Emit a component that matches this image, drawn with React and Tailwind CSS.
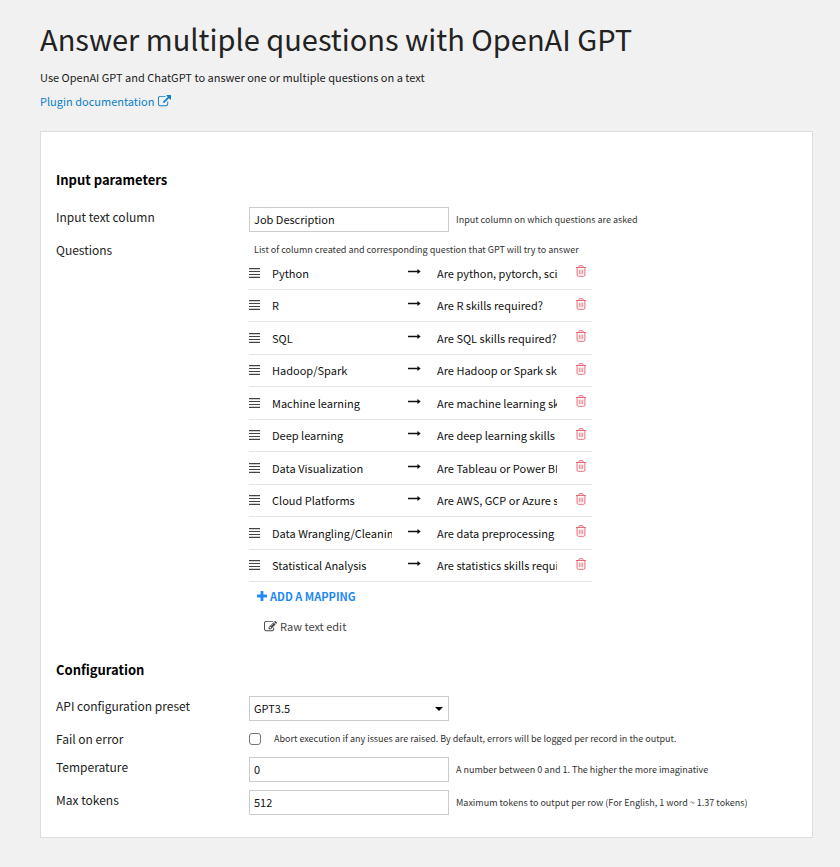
import React, { useState } from "react";

const initialMappings = [
  { name: "Python", question: "Are python, pytorch, scikit-learn skills required?" },
  { name: "R", question: "Are R skills required?" },
  { name: "SQL", question: "Are SQL skills required?" },
  { name: "Hadoop/Spark", question: "Are Hadoop or Spark skills required?" },
  { name: "Machine learning", question: "Are machine learning skills required?" },
  { name: "Deep learning", question: "Are deep learning skills required?" },
  { name: "Data Visualization", question: "Are Tableau or Power BI skills required?" },
  { name: "Cloud Platforms", question: "Are AWS, GCP or Azure skills required?" },
  { name: "Data Wrangling/Cleaning", question: "Are data preprocessing skills required?" },
  { name: "Statistical Analysis", question: "Are statistics skills required?" },
];

const ExternalLinkIcon = () => (
  <svg viewBox="0 0 1792 1792" className="w-[13px] h-[13px]" fill="currentColor" aria-hidden="true">
    <path d="M1408 928v320q0 119-84.5 203.5t-203.5 84.5h-832q-119 0-203.5-84.5t-84.5-203.5v-832q0-119 84.5-203.5t203.5-84.5h704q14 0 23 9t9 23v64q0 14-9 23t-23 9h-704q-66 0-113 47t-47 113v832q0 66 47 113t113 47h832q66 0 113-47t47-113v-320q0-14 9-23t23-9h64q14 0 23 9t9 23zm384-864v512q0 26-19 45t-45 19-45-19l-176-176-652 652q-10 10-23 10t-23-10l-114-114q-10-10-10-23t10-23l652-652-176-176q-19-19-19-45t19-45 45-19h512q26 0 45 19t19 45z" />
  </svg>
);

const EditIcon = () => (
  <svg viewBox="0 0 1792 1792" className="w-[13px] h-[13px]" fill="currentColor" aria-hidden="true">
    <path d="M888 1184l116-116-152-152-116 116v56h96v96h56zm440-720q-16-16-33 1l-350 350q-17 17-1 33t33-1l350-350q17-17 1-33zm80 594v190q0 119-84.5 203.5t-203.5 84.5h-832q-119 0-203.5-84.5t-84.5-203.5v-832q0-119 84.5-203.5t203.5-84.5h832q63 0 117 25 15 7 18 23 3 17-9 29l-49 49q-14 14-32 8-23-6-45-6h-832q-66 0-113 47t-47 113v832q0 66 47 113t113 47h832q66 0 113-47t47-113v-126q0-13 9-22l64-64q15-15 35-7t20 29zm-96-738l288 288-672 672h-288v-288zm444 132l-92 92-288-288 92-92q28-28 68-28t68 28l152 152q28 28 28 68t-28 68z" />
  </svg>
);

const PlusIcon = () => (
  <svg viewBox="0 0 10 10" className="w-2.5 h-2.5" fill="currentColor" aria-hidden="true">
    <path d="M3.6 .4q0-.4.4-.4h2q.4 0 .4.4v3.2h3.2q.4 0 .4.4v2q0 .4-.4.4H6.4v3.2q0 .4-.4.4H4q-.4 0-.4-.4V6.4H.4Q0 6.4 0 6V4q0-.4.4-.4h3.2z" />
  </svg>
);

const GripIcon = () => (
  <svg viewBox="0 0 11 10" className="w-[11px] h-2.5" fill="#444" aria-hidden="true">
    <path d="M0 0h11v1.2H0zM0 2.9h11v1.2H0zM0 5.9h11v1.2H0zM0 8.8h11V10H0z" />
  </svg>
);

const ArrowIcon = () => (
  <svg viewBox="0 0 13 7" className="w-[13px] h-[7px]" fill="#111" aria-hidden="true">
    <path d="M0 2.7h9.4V1.4q0-.5.4-.2l2.6 2q.4.3 0 .6l-2.6 2q-.4.3-.4-.2V4.3H0z" />
  </svg>
);

const TrashIcon = () => (
  <svg viewBox="0 0 10 12" className="w-2.5 h-3" fill="none" stroke="currentColor" aria-hidden="true">
    <path d="M0 2.5h10M2.9 2.4V1.6q0-.9.9-.9h2.4q.9 0 .9.9v.8M1.1 2.8v7.2q0 1.3 1.3 1.3h5.2q1.3 0 1.3-1.3V2.8" />
    <path d="M3.3 4.6v4.6M5 4.6v4.6M6.7 4.6v4.6" strokeWidth="0.8" />
  </svg>
);

const Label = ({ children, ...props }) => (
  <label className="w-[193px] shrink-0 text-[12px] leading-5 text-[#222]" {...props}>
    {children}
  </label>
);

const Hint = ({ children, ...props }) => (
  <span className="text-[9px] leading-4 text-[#333]" {...props}>
    {children}
  </span>
);

const inputClass =
  "w-[200px] h-[25px] shrink-0 border border-[#ccc] bg-white px-1 pb-0.5 text-[11px] leading-5 text-[#111] outline-none";

const App = () => {
  const [mappings, setMappings] = useState(initialMappings);
  const [input, setInput] = useState({
    column: "Job Description",
    preset: "GPT3.5",
    failOnError: false,
    temperature: "0",
    maxTokens: "512",
  });

  const changeMapping = (index, key, value) => {
    setMappings(mappings.map((m, i) => (i === index ? { ...m, [key]: value } : m)));
  };

  const removeMapping = (index) => {
    setMappings(mappings.filter((_, i) => i !== index));
  };

  return (
    <div className="min-h-screen bg-[#f1f1f1] pt-[18px] pr-[27px] pb-7 pl-10 font-['Noto_Sans_CJK_SC',sans-serif] text-[#222]">
      <header>
        <h1 className="text-[29px] leading-10">Answer multiple questions with OpenAI GPT</h1>
        <p className="mt-[9px] text-[11px] leading-5">
          Use OpenAI GPT and ChatGPT to answer one or multiple questions on a text
        </p>
        <a href="#docs" className="mt-1 flex w-fit items-center gap-1 text-[11px] leading-5 text-[#0a7fc9]">
          Plugin documentation <ExternalLinkIcon />
        </a>
      </header>

      <main className="mt-5 border border-[#ddd] bg-white px-[15px] pt-[38px] pb-[22px]">
        <section>
          <h2 className="text-[13px] leading-5 font-bold text-black">Input parameters</h2>
          <div className="mt-[17px] flex items-start">
            <Label htmlFor="column">Input text column</Label>
            <div className="flex items-center gap-[7px]">
              <input
                id="column"
                className={inputClass}
                value={input.column}
                onChange={(e) => setInput({ ...input, column: e.target.value })}
              />
              <Hint>Input column on which questions are asked</Hint>
            </div>
          </div>
          <div className="mt-2 flex items-start">
            <span className="w-[193px] shrink-0 text-[12px] leading-5 text-[#222]">Questions</span>
            <div className="w-[343px]">
              <p className="pt-0.5 pl-[5px] text-[9px] leading-[15px] text-[#333]">
                List of column created and corresponding question that GPT will try to answer
              </p>
              <ul className="grid h-[325px] auto-rows-fr">
                {mappings.map((m, i) => (
                  <li key={i} className="flex items-center border-b border-[#e5e5e5]">
                    <GripIcon />
                    <input
                      aria-label="Column name"
                      className="ml-3 w-[120px] bg-transparent text-[11px] leading-5 text-[#111] outline-none"
                      value={m.name}
                      onChange={(e) => changeMapping(i, "name", e.target.value)}
                    />
                    <span className="ml-4 pb-[3px]">
                      <ArrowIcon />
                    </span>
                    <input
                      aria-label="Question"
                      className="ml-4 w-[120px] bg-transparent text-[11px] leading-5 text-[#111] outline-none"
                      value={m.question}
                      onChange={(e) => changeMapping(i, "question", e.target.value)}
                    />
                    <button
                      type="button"
                      aria-label="Remove mapping"
                      onClick={() => removeMapping(i)}
                      className="ml-[19px] pb-[3px] text-[#e8697a]"
                    >
                      <TrashIcon />
                    </button>
                  </li>
                ))}
              </ul>
              <button
                type="button"
                onClick={() => setMappings([...mappings, { name: "", question: "" }])}
                className="mt-1 ml-2 flex items-center gap-[3px] text-[11px] leading-5 font-bold text-[#1e88f7]"
              >
                <PlusIcon /> ADD A MAPPING
              </button>
              <button
                type="button"
                className="mt-2.5 ml-[15px] flex items-center gap-[3px] text-[11px] leading-5 text-[#444]"
              >
                <EditIcon /> Raw text edit
              </button>
            </div>
          </div>
        </section>

        <section className="mt-6">
          <h2 className="text-[13px] leading-5 font-bold text-black">Configuration</h2>
          <div className="mt-4 flex items-start">
            <Label htmlFor="preset">API configuration preset</Label>
            <div className="grid items-center">
              <select
                id="preset"
                className={`${inputClass} col-start-1 row-start-1 appearance-none`}
                value={input.preset}
                onChange={(e) => setInput({ ...input, preset: e.target.value })}
              >
                <option>GPT3.5</option>
                <option>GPT4</option>
              </select>
              <svg
                viewBox="0 0 8 4"
                className="pointer-events-none col-start-1 row-start-1 mr-1.5 h-1 w-2 justify-self-end"
                aria-hidden="true"
              >
                <path d="M0 0h8L4 4z" />
              </svg>
            </div>
          </div>
          <div className="mt-2 flex items-center">
            <Label htmlFor="fail">Fail on error</Label>
            <input
              id="fail"
              type="checkbox"
              className="h-3 w-3 appearance-none rounded-[3px] border border-[#767676] bg-white checked:bg-[#1e88f7]"
              checked={input.failOnError}
              onChange={(e) => setInput({ ...input, failOnError: e.target.checked })}
            />
            <span className="ml-[13px] flex">
              <Hint>
                Abort execution if any issues are raised. By default, errors will be logged per record in the output.
              </Hint>
            </span>
          </div>
          <div className="mt-2 flex items-start">
            <Label htmlFor="temperature">Temperature</Label>
            <div className="flex items-center gap-[7px]">
              <input
                id="temperature"
                className={inputClass}
                value={input.temperature}
                onChange={(e) => setInput({ ...input, temperature: e.target.value })}
              />
              <Hint>A number between 0 and 1. The higher the more imaginative</Hint>
            </div>
          </div>
          <div className="mt-2 flex items-start">
            <Label htmlFor="tokens">Max tokens</Label>
            <div className="flex items-center gap-[7px]">
              <input
                id="tokens"
                className={inputClass}
                value={input.maxTokens}
                onChange={(e) => setInput({ ...input, maxTokens: e.target.value })}
              />
              <Hint>Maximum tokens to output per row (For English, 1 word ~ 1.37 tokens)</Hint>
            </div>
          </div>
        </section>
      </main>
    </div>
  );
};

export default App;
